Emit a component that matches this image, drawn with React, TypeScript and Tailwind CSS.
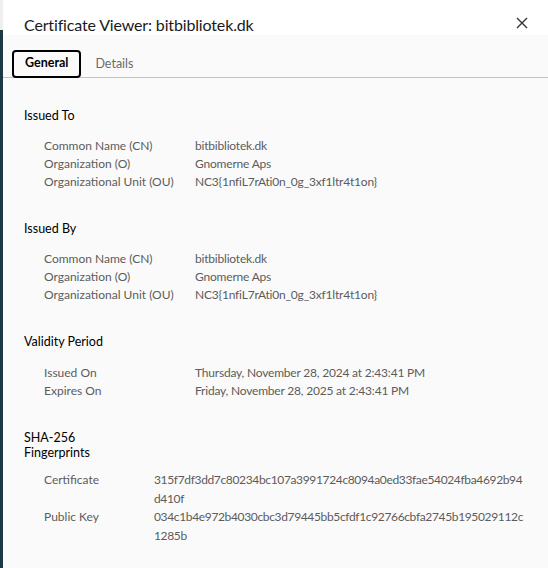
import React from 'react';

const FONT = { fontFamily: 'Lato, "Noto Sans", sans-serif' };

type Row = { label: string; value: string };

const Section: React.FC<{
  title: React.ReactNode;
  rows: Row[];
  labelCol?: string;
  valueCls?: string;
  titleGap?: string;
  rowCls?: string;
}> = ({ title, rows, labelCol = 'w-[151px]', valueCls = 'tracking-[-0.2px]', titleGap = 'mb-[14px]', rowCls = 'leading-[18px]' }) => (
  <section className="mb-[30px]">
    <h3 className={`text-[12.5px] leading-[15px] text-black ${titleGap}`}>{title}</h3>
    <div className="pl-[20px]">
      {rows.map(r => (
        <div key={r.label} className={`flex text-[12px] text-[#5c5c5c] ${rowCls}`}>
          <div className={`${labelCol} shrink-0`}>{r.label}</div>
          <div className={`flex-1 break-all pr-[20px] ${valueCls}`}>{r.value}</div>
        </div>
      ))}
    </div>
  </section>
);

export default function App() {
  return (
    <div className="flex h-[568px] w-[548px] overflow-hidden" style={FONT}>
      <div className="w-[3px] flex flex-col shrink-0">
        <div className="h-[30px] bg-[#eeeeee]" />
        <div className="flex-1 bg-[#1e3843]" />
      </div>
      <div className="flex-1 flex flex-col bg-[#fafafa]">
        <header className="h-[36px] bg-white flex items-start justify-between pl-[21px] pr-[20px] pt-[15px]">
          <h1 className="text-[16px] tracking-[-0.15px] text-[#1a1a1a] leading-[20px]">Certificate Viewer: bitbibliotek.dk</h1>
          <svg width="12" height="12" viewBox="0 0 12 12" className="mt-[2px]">
            <path d="M1 1 L11 11 M11 1 L1 11" stroke="#333" strokeWidth="1.4" />
          </svg>
        </header>
        <nav className="flex items-center gap-[14px] px-[9px] pt-[14px] border-b border-[#c4c4c4]">
          <div className="h-[28px] px-[11px] border-2 border-black rounded-[4px] flex items-center text-[12.5px] font-bold text-black mb-[-1px]">General</div>
          <div className="h-[28px] flex items-center pt-[2px] text-[12.5px] text-[#6b6b6b]">Details</div>
        </nav>
        <main className="pl-[21px] pt-[30px]">
          <Section
            title="Issued To"
            rows={[
              { label: 'Common Name (CN)', value: 'bitbibliotek.dk' },
              { label: 'Organization (O)', value: 'Gnomerne Aps' },
              { label: 'Organizational Unit (OU)', value: 'NC3{1nfiL7rAti0n_0g_3xf1ltr4t1on}' },
            ]}
          />
          <Section
            title="Issued By"
            rows={[
              { label: 'Common Name (CN)', value: 'bitbibliotek.dk' },
              { label: 'Organization (O)', value: 'Gnomerne Aps' },
              { label: 'Organizational Unit (OU)', value: 'NC3{1nfiL7rAti0n_0g_3xf1ltr4t1on}' },
            ]}
          />
          <Section
            title="Validity Period"
            titleGap="mb-[15px]"
            rows={[
              { label: 'Issued On', value: 'Thursday, November 28, 2024 at 2:43:41 PM' },
              { label: 'Expires On', value: 'Friday, November 28, 2025 at 2:43:41 PM' },
            ]}
          />
          <Section
            title={<>SHA-256<br />Fingerprints</>}
            labelCol="w-[110px]"
            valueCls="tracking-[-0.35px]"
            titleGap="mb-[11px]"
            rowCls="leading-[18.5px]"
            rows={[
              { label: 'Certificate', value: '315f7df3dd7c80234bc107a3991724c8094a0ed33fae54024fba4692b94d410f' },
              { label: 'Public Key', value: '034c1b4e972b4030cbc3d79445bb5cfdf1c92766cbfa2745b195029112c1285b' },
            ]}
          />
        </main>
      </div>
    </div>
  );
}
